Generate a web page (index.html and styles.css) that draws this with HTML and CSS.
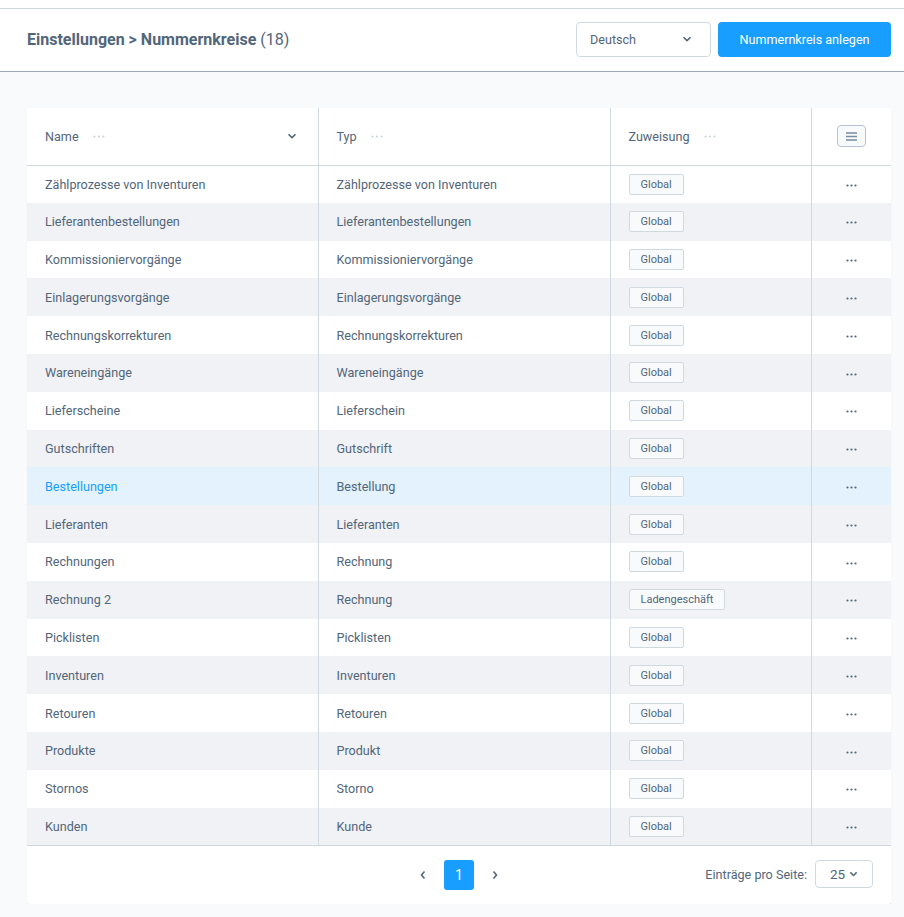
FILE: index.html
```html
<!DOCTYPE html>
<html lang="de">

<head>
	<meta name="viewport" content="width=device-width, initial-scale=1">
	<title>Nummernkreise</title>
	<link rel="stylesheet" href="styles.css">
</head>

<body>
	<header class="topbar">
		<h1 class="title"><strong>Einstellungen &gt; Nummernkreise</strong> (18)</h1>
		<div class="actions">
			<div class="select lang">
				<span>Deutsch</span>
				<svg width="10" height="6" viewBox="0 0 10 6"><path d="M1.5 1.2 5 4.6 8.5 1.2" fill="none" stroke="#52667a" stroke-width="1.6"/></svg>
			</div>
			<button class="btn-primary">Nummernkreis anlegen</button>
		</div>
	</header>
	<main>
		<div class="card">
			<table class="grid">
				<colgroup>
					<col style="width:291px">
					<col style="width:292px">
					<col style="width:201px">
					<col>
				</colgroup>
				<thead>
					<tr>
						<th><div class="th-inner"><span>Name</span><svg class="more" width="12" height="3" viewBox="0 0 12 3"><circle cx="1.5" cy="1.5" r="1"/><circle cx="6" cy="1.5" r="1"/><circle cx="10.5" cy="1.5" r="1"/></svg><svg class="sort" width="10" height="6" viewBox="0 0 10 6"><path d="M1.5 1.2 5 4.6 8.5 1.2" fill="none" stroke="#52667a" stroke-width="1.6"/></svg></div></th>
						<th><div class="th-inner"><span>Typ</span><svg class="more" width="12" height="3" viewBox="0 0 12 3"><circle cx="1.5" cy="1.5" r="1"/><circle cx="6" cy="1.5" r="1"/><circle cx="10.5" cy="1.5" r="1"/></svg></div></th>
						<th><div class="th-inner"><span>Zuweisung</span><svg class="more" width="12" height="3" viewBox="0 0 12 3"><circle cx="1.5" cy="1.5" r="1"/><circle cx="6" cy="1.5" r="1"/><circle cx="10.5" cy="1.5" r="1"/></svg></div></th>
						<th class="col-act"><span class="col-btn"><svg width="11" height="9" viewBox="0 0 11 9"><path d="M0 1h11M0 4.5h11M0 8h11" stroke="#758ca3" stroke-width="1.6"/></svg></span></th>
					</tr>
				</thead>
				<tbody id="rows"></tbody>
			</table>
			<footer class="pager">
				<div class="pages">
					<svg width="8" height="10" viewBox="0 0 8 10"><path d="M5.5 1.5 2.5 5l3 3.5" fill="none" stroke="#52667a" stroke-width="1.6"/></svg>
					<span class="page active">1</span>
					<svg width="8" height="10" viewBox="0 0 8 10"><path d="M2.5 1.5 5.5 5l-3 3.5" fill="none" stroke="#52667a" stroke-width="1.6"/></svg>
				</div>
				<div class="per-page">
					<span>Einträge pro Seite:</span>
					<div class="select small">
						<span>25</span>
						<svg width="9" height="6" viewBox="0 0 10 6"><path d="M1.5 1.2 5 4.6 8.5 1.2" fill="none" stroke="#52667a" stroke-width="1.6"/></svg>
					</div>
				</div>
			</footer>
		</div>
	</main>
	<script>
		const rows = [
			['Zählprozesse von Inventuren', 'Zählprozesse von Inventuren', 'Global'],
			['Lieferantenbestellungen', 'Lieferantenbestellungen', 'Global'],
			['Kommissioniervorgänge', 'Kommissioniervorgänge', 'Global'],
			['Einlagerungsvorgänge', 'Einlagerungsvorgänge', 'Global'],
			['Rechnungskorrekturen', 'Rechnungskorrekturen', 'Global'],
			['Wareneingänge', 'Wareneingänge', 'Global'],
			['Lieferscheine', 'Lieferschein', 'Global'],
			['Gutschriften', 'Gutschrift', 'Global'],
			['Bestellungen', 'Bestellung', 'Global'],
			['Lieferanten', 'Lieferanten', 'Global'],
			['Rechnungen', 'Rechnung', 'Global'],
			['Rechnung 2', 'Rechnung', 'Ladengeschäft'],
			['Picklisten', 'Picklisten', 'Global'],
			['Inventuren', 'Inventuren', 'Global'],
			['Retouren', 'Retouren', 'Global'],
			['Produkte', 'Produkt', 'Global'],
			['Stornos', 'Storno', 'Global'],
			['Kunden', 'Kunde', 'Global']
		];

		const dots = '<svg width="11" height="3" viewBox="0 0 11 3"><circle cx="1.5" cy="1.5" r="1.1"/><circle cx="5.5" cy="1.5" r="1.1"/><circle cx="9.5" cy="1.5" r="1.1"/></svg>';

		document.getElementById('rows').innerHTML = rows.map((row, i) =>
			`<tr${i === 8 ? ' class="is-hover"' : ''}><td>${row[0]}</td><td>${row[1]}</td><td><span class="badge">${row[2]}</span></td><td class="col-act">${dots}</td></tr>`
		).join('');
	</script>
</body>

</html>
```

FILE: styles.css
```css
* {
	box-sizing: border-box;
}

body,
html {
	margin: 0;
	font-family: Roboto, "Liberation Sans", sans-serif;
	color: #52667a;
	background-color: #f9fafb;
}

body {
	border-top: 8px solid #fff;
}

.topbar {
	display: flex;
	align-items: center;
	justify-content: space-between;
	height: 64px;
	padding: 0 13px 0 27px;
	background-color: #fff;
	border-top: 1px solid #d1d9e0;
	border-bottom: 1px solid #9aaab8;
}

.title {
	margin: 0 0 2px;
	font-size: 16px;
	font-weight: 400;
	color: #52667a;
}

.title strong {
	font-weight: 700;
}

.actions {
	display: flex;
	gap: 7px;
	margin-bottom: 2px;
}

.select {
	display: flex;
	align-items: center;
	justify-content: space-between;
	background-color: #fff;
	border: 1px solid #d1d9e0;
	border-radius: 4px;
	font-size: 12.6px;
}

.lang {
	width: 135px;
	height: 35px;
	padding: 0 18px 0 13px;
}

.btn-primary {
	width: 173px;
	height: 35px;
	border: 0;
	border-radius: 4px;
	background-color: #189eff;
	color: #fff;
	font-family: inherit;
	font-size: 12.6px;
}

main {
	padding: 36px 13px 0 27px;
}

.card {
	background-color: #fff;
	box-shadow: 0 2px 1px rgba(0, 0, 0, .14);
	border-radius: 2px;
}

.grid {
	width: 100%;
	border-collapse: collapse;
	table-layout: fixed;
	font-size: 12.6px;
}

.grid th {
	height: 57px;
	padding: 0 18px;
	font-weight: 400;
	text-align: left;
	border-bottom: 1px solid #d1d9e0;
}

.grid th + th,
.grid td + td {
	border-left: 1px solid #d1d9e0;
}

.grid td {
	height: 37.8px;
	padding: 0 18px;
	white-space: nowrap;
}

.grid tbody tr:nth-child(even) {
	background-color: #f0f2f5;
}

.grid tbody tr.is-hover {
	background-color: #e3f2fd;
}

.grid tbody tr.is-hover td:first-child {
	color: #189eff;
}

.th-inner {
	display: flex;
	align-items: center;
	gap: 14px;
}

.more {
	fill: #c6d0da;
}

.sort {
	margin-left: auto;
	margin-right: 3px;
}

.grid .col-act {
	text-align: center;
	padding: 0;
}

.col-act svg {
	fill: #52667a;
	vertical-align: middle;
}

.col-btn {
	display: inline-flex;
	align-items: center;
	justify-content: center;
	width: 29px;
	height: 22px;
	border: 1px solid #b5c3d0;
	border-radius: 4px;
	background-color: #f9fafb;
}

.badge {
	display: inline-block;
	padding: 3px 11px;
	font-size: 11px;
	line-height: 13px;
	border: 1px solid #d1d9e0;
	border-radius: 2px;
	background-color: #f9fafb;
}

.pager {
	position: relative;
	display: flex;
	align-items: center;
	justify-content: center;
	height: 59px;
	border-top: 1px solid #d1d9e0;
	font-size: 12.6px;
}

.pages {
	display: flex;
	align-items: center;
	gap: 17px;
}

.page {
	display: flex;
	align-items: center;
	justify-content: center;
	width: 30px;
	height: 30px;
	border-radius: 3px;
	font-size: 14px;
}

.page.active {
	background-color: #189eff;
	color: #fff;
}

.per-page {
	position: absolute;
	right: 18px;
	top: 14px;
	display: flex;
	align-items: center;
	gap: 8px;
}

.small {
	width: 58px;
	height: 28px;
	padding: 0 14px;
	font-size: 13.5px;
}
```
